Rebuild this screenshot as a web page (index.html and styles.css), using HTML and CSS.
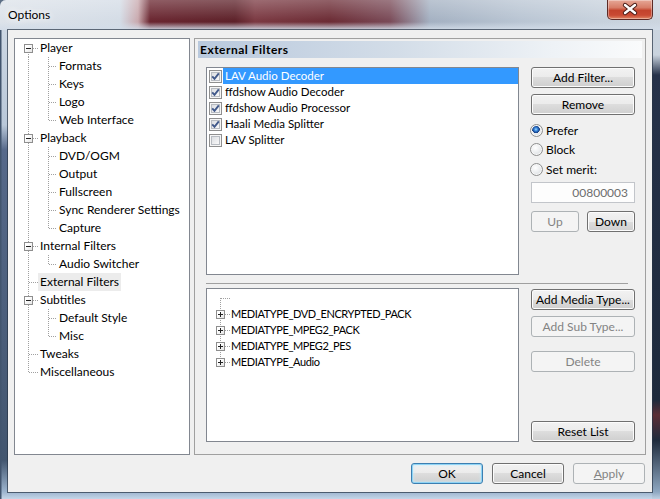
FILE: index.html
```html
<!DOCTYPE html>
<html lang="en">
<head>
    <meta charset="UTF-8">
    <title>Options</title>
    <link rel="stylesheet" href="styles.css">
</head>
<body>
    <div class="window">
        <div class="titlebar">
            <span class="title">Options</span>
            <span class="close-btn">
                <svg width="44" height="19" viewBox="0 0 44 19">
                    <path d="M17 5 L27 13 M27 5 L17 13" stroke="#4a1d18" stroke-width="4.4" stroke-linecap="round" fill="none"/>
                    <path d="M17 5 L27 13 M27 5 L17 13" stroke="#fff" stroke-width="2.4" stroke-linecap="round" fill="none"/>
                </svg>
            </span>
        </div>

        <div class="client">
            <div class="main">
                <!-- page tree -->
                <div class="nav-tree">
                    <div class="row"><span class="g first"><span class="box"></span></span><span class="label">Player</span></div>
                    <div class="row"><span class="g pass"></span><span class="g sub tee"></span><span class="label">Formats</span></div>
                    <div class="row"><span class="g pass"></span><span class="g sub tee"></span><span class="label">Keys</span></div>
                    <div class="row"><span class="g pass"></span><span class="g sub tee"></span><span class="label">Logo</span></div>
                    <div class="row"><span class="g pass"></span><span class="g sub last"></span><span class="label">Web Interface</span></div>
                    <div class="row"><span class="g tee"><span class="box"></span></span><span class="label">Playback</span></div>
                    <div class="row"><span class="g pass"></span><span class="g sub tee"></span><span class="label">DVD/OGM</span></div>
                    <div class="row"><span class="g pass"></span><span class="g sub tee"></span><span class="label">Output</span></div>
                    <div class="row"><span class="g pass"></span><span class="g sub tee"></span><span class="label">Fullscreen</span></div>
                    <div class="row"><span class="g pass"></span><span class="g sub tee"></span><span class="label">Sync Renderer Settings</span></div>
                    <div class="row"><span class="g pass"></span><span class="g sub last"></span><span class="label">Capture</span></div>
                    <div class="row"><span class="g tee"><span class="box"></span></span><span class="label">Internal Filters</span></div>
                    <div class="row"><span class="g pass"></span><span class="g sub last"></span><span class="label">Audio Switcher</span></div>
                    <div class="row"><span class="g tee"></span><span class="label selected">External Filters</span></div>
                    <div class="row"><span class="g tee"><span class="box"></span></span><span class="label">Subtitles</span></div>
                    <div class="row"><span class="g pass"></span><span class="g sub tee"></span><span class="label">Default Style</span></div>
                    <div class="row"><span class="g pass"></span><span class="g sub last"></span><span class="label">Misc</span></div>
                    <div class="row"><span class="g tee"></span><span class="label">Tweaks</span></div>
                    <div class="row"><span class="g last"></span><span class="label">Miscellaneous</span></div>
                </div>

                <!-- property page -->
                <div class="page">
                    <div class="page-title">External Filters</div>
                    <div class="page-body">
                        <div class="section top">
                            <div class="listbox">
                                <div class="item"><span class="cb"><svg width="11" height="11" viewBox="0 0 11 11"><path d="M2.2 5.4 L4.5 7.9 L8.8 2.4" stroke="#41598a" stroke-width="1.9" fill="none"/></svg></span><span class="text selected">LAV Audio Decoder</span></div>
                                <div class="item"><span class="cb"><svg width="11" height="11" viewBox="0 0 11 11"><path d="M2.2 5.4 L4.5 7.9 L8.8 2.4" stroke="#41598a" stroke-width="1.9" fill="none"/></svg></span><span class="text">ffdshow Audio Decoder</span></div>
                                <div class="item"><span class="cb"><svg width="11" height="11" viewBox="0 0 11 11"><path d="M2.2 5.4 L4.5 7.9 L8.8 2.4" stroke="#41598a" stroke-width="1.9" fill="none"/></svg></span><span class="text">ffdshow Audio Processor</span></div>
                                <div class="item"><span class="cb"><svg width="11" height="11" viewBox="0 0 11 11"><path d="M2.2 5.4 L4.5 7.9 L8.8 2.4" stroke="#41598a" stroke-width="1.9" fill="none"/></svg></span><span class="text">Haali Media Splitter</span></div>
                                <div class="item"><span class="cb"></span><span class="text">LAV Splitter</span></div>
                            </div>
                            <div class="side">
                                <button class="btn">Add Filter...</button>
                                <button class="btn gap-6">Remove</button>
                                <div class="radios">
                                    <div class="radio"><span class="rb on"></span>Prefer</div>
                                    <div class="radio"><span class="rb"></span>Block</div>
                                    <div class="radio"><span class="rb"></span>Set merit:</div>
                                </div>
                                <div class="merit">00800003</div>
                                <div class="updown">
                                    <button class="btn" disabled>Up</button>
                                    <button class="btn">Down</button>
                                </div>
                            </div>
                        </div>

                        <div class="sep"></div>

                        <div class="section bottom">
                            <div class="type-tree">
                                <div class="row"><span class="g first"></span></div>
                                <div class="row"><span class="g tee"><span class="box plus"></span></span><span class="label">MEDIATYPE_DVD_ENCRYPTED_PACK</span></div>
                                <div class="row"><span class="g tee"><span class="box plus"></span></span><span class="label">MEDIATYPE_MPEG2_PACK</span></div>
                                <div class="row"><span class="g tee"><span class="box plus"></span></span><span class="label">MEDIATYPE_MPEG2_PES</span></div>
                                <div class="row"><span class="g last"><span class="box plus"></span></span><span class="label">MEDIATYPE_Audio</span></div>
                            </div>
                            <div class="side">
                                <button class="btn gap-1">Add Media Type...</button>
                                <button class="btn gap-6" disabled>Add Sub Type...</button>
                                <button class="btn gap-14" disabled>Delete</button>
                                <button class="btn push-down">Reset List</button>
                            </div>
                        </div>
                    </div>
                </div>
            </div>

            <div class="footer">
                <button class="btn wide default">OK</button>
                <button class="btn wide">Cancel</button>
                <button class="btn wide" disabled><u>A</u>pply</button>
            </div>
        </div>
    </div>
</body>
</html>
```

FILE: styles.css
```css
* {
    box-sizing: border-box;
}

body {
    margin: 0;
    background: #5d6f86;
    font-family: "Segoe UI", Lato, "Liberation Sans", sans-serif;
    font-size: 12px;
    color: #000;
}

/* glass frame */
.window {
    width: 660px;
    height: 499px;
    padding: 0 8px 7px 8px;
    display: flex;
    flex-direction: column;
    overflow: hidden;
    border-radius: 6px 0 0 0;
    background:
        linear-gradient(to bottom, #cdd6e0 0, #c9d3de 55px, #26324a 75px, #1e2a3c 400px, #5b2d35 415px, #1f2b3c 440px, #8ea7c1 492px, #bfd0e2 499px) right top / 8px 100% no-repeat,
        linear-gradient(to right, #42556e 0, #42556e 1px, transparent 2px),
        linear-gradient(to bottom, #d2dbe6 0, #b9c8d9 125px, #56698a 150px, #43566f 460px, #9db5cf 492px, #c5d6e8 499px);
    box-shadow: inset 0 1px 0 #4a5a70;
}

.titlebar {
    height: 30px;
    margin: 0 -8px;
    padding: 0 7px 0 8px;
    display: flex;
    align-items: flex-start;
    justify-content: space-between;
    background:
        linear-gradient(to bottom, rgba(255, 255, 255, 0.25), rgba(255, 255, 255, 0) 70%),
        linear-gradient(to bottom, transparent 0, transparent 22px, rgba(210, 220, 232, 0.85) 29px),
        linear-gradient(to right, #dde3ea 0, #d4dce6 120px, #c9a9ae 138px, #6a2630 150px, #5d2129 235px, #7b3942 255px, #6c2c35 330px, #7a4b58 390px, #a4b1c2 430px, #b9c5d3 520px, #c7d1dc 600px, #ccd5df 660px);
}

.title {
    line-height: 30px;
    font-size: 12px;
    text-shadow: 0 0 6px #fff, 0 0 10px #fff;
}

.close-btn {
    width: 46px;
    height: 20px;
    display: flex;
    align-items: center;
    justify-content: center;
    border: 1px solid #5c2a25;
    border-top: none;
    border-radius: 0 0 5px 5px;
    background: linear-gradient(to bottom, #e6a797 0, #d77d68 40%, #c3432c 55%, #c94a33 80%, #e08664 100%);
    box-shadow: inset 0 0 0 1px rgba(255, 255, 255, 0.35);
}

.client {
    height: 462px;
    padding: 8px 6px;
    background: #f0f0f0;
    box-shadow: 0 0 0 1px rgba(40, 52, 70, 0.7);
    display: flex;
    flex-direction: column;
}

.main {
    height: 417px;
    display: flex;
    gap: 4px;
}

/* tree views */
.nav-tree {
    width: 176px;
    border: 1px solid #828790;
    background: #fff;
}

.row {
    height: 18px;
    display: flex;
    --mid: 9px;
}

.label {
    padding: 0 2px;
    line-height: 18px;
    white-space: nowrap;
}

.label.selected {
    background: #ececec;
}

.g {
    flex: none;
    width: 23px;
    --x: 13px;
    --dv: repeating-linear-gradient(to bottom, #a0a0a0 0 1px, transparent 1px 2px);
    --dh: repeating-linear-gradient(to right, #a0a0a0 0 1px, transparent 1px 2px);
    padding-top: calc(var(--mid) - 4px);
    padding-left: calc(var(--x) - 4px);
    background-repeat: no-repeat;
}

.g.sub {
    width: 19px;
    --x: 10px;
}

.g.pass {
    background-image: var(--dv);
    background-position: var(--x) 0;
    background-size: 1px 100%;
}

.g.tee {
    background-image: var(--dh), var(--dv);
    background-position: calc(var(--x) + 1px) var(--mid), var(--x) 0;
    background-size: 100% 1px, 1px 100%;
}

.g.last {
    background-image: var(--dh), var(--dv);
    background-position: calc(var(--x) + 1px) var(--mid), var(--x) 0;
    background-size: 100% 1px, 1px calc(var(--mid) + 1px);
}

.g.first {
    background-image: var(--dh), var(--dv);
    background-position: calc(var(--x) + 1px) var(--mid), var(--x) var(--mid);
    background-size: 100% 1px, 1px 100%;
}

.box {
    display: block;
    width: 9px;
    height: 9px;
    border: 1px solid #8e8e8e;
    background:
        linear-gradient(#222, #222) center / 5px 1px no-repeat,
        linear-gradient(135deg, #fff 30%, #e4e4e4);
}

.box.plus {
    background:
        linear-gradient(#222, #222) center / 5px 1px no-repeat,
        linear-gradient(#222, #222) center / 1px 5px no-repeat,
        linear-gradient(135deg, #fff 30%, #e4e4e4);
}

/* property page */
.page {
    flex: 1;
    border: 1px solid #a0a0a0;
    display: flex;
    flex-direction: column;
}

.page-title {
    height: 17px;
    margin: 2px 3px 0;
    padding-left: 2px;
    line-height: 17px;
    font-weight: bold;
    letter-spacing: 0.5px;
    background: linear-gradient(to right, #b9c9dd 0, #d3dde8 45%, #eef2f6 80%, #fafbfc 100%);
}

.page-body {
    flex: 1;
    padding: 9px 10px 12px 11px;
    display: flex;
    flex-direction: column;
}

.section {
    display: flex;
    gap: 12px;
}

.section.top {
    height: 208px;
}

.section.bottom {
    flex: 1;
}

.sep {
    height: 1px;
    margin: 8px 7px 4px 0;
    background: #a0a0a0;
}

.listbox {
    flex: 1;
    border: 1px solid #828790;
    background: #fff;
    font-size: 11.5px;
}

.item {
    height: 16px;
    display: flex;
    align-items: center;
}

.cb {
    width: 13px;
    height: 13px;
    margin: 0 1px 0 2px;
    flex: none;
    border: 1px solid #8f8f8f;
    background: linear-gradient(135deg, #d3d6db 0, #f4f4f5 70%, #fdfdfd 100%);
    box-shadow: inset 0 0 0 1px #f6f6f6, inset 0 0 0 2px #b8bcc2;
}

.cb svg {
    display: block;
}

.item .text {
    flex: 1;
    height: 16px;
    padding-left: 2px;
    line-height: 16px;
}

.item .text.selected {
    background: #3399ff;
    color: #fff;
}

.type-tree {
    flex: 1;
    padding-top: 1px;
    border: 1px solid #828790;
    background: #fff;
}

.type-tree .row {
    height: 16px;
    --mid: 8px;
}

.type-tree .label {
    line-height: 16px;
    padding-left: 1px;
    font-size: 11px;
    letter-spacing: -0.4px;
}

/* buttons */
.side {
    width: 104px;
    flex: none;
    display: flex;
    flex-direction: column;
}

.btn {
    height: 21px;
    padding: 0;
    border: 1px solid #707070;
    border-radius: 3px;
    font: inherit;
    color: #000;
    background: linear-gradient(to bottom, #f2f2f2 0, #ebebeb 50%, #dddddd 50%, #cfcfcf 100%);
    box-shadow: inset 0 0 0 1px #fcfcfc;
}

.btn:disabled {
    border-color: #adb2b5;
    background: #f4f4f4;
    box-shadow: none;
    color: #838383;
}

.btn.default {
    border-color: #3c7fb1;
    box-shadow: inset 0 0 0 1px #8fd4f5, inset 0 0 3px 1px #c6ebfb;
}

.gap-1 { margin-top: 1px; }
.gap-6 { margin-top: 6px; }
.gap-14 { margin-top: 14px; }
.push-down { margin-top: auto; }

.radios {
    margin: 5px 0 0 -1px;
}

.radio {
    height: 20px;
    display: flex;
    align-items: center;
    gap: 3px;
}

.radio:nth-child(2) {
    height: 19px;
}

.rb {
    width: 13px;
    height: 13px;
    border-radius: 50%;
    border: 1px solid #8e8f8f;
    background: radial-gradient(circle at 40% 35%, #ffffff 0, #eceef0 45%, #cfd3d8 100%);
    box-shadow: inset 0 0 0 1px #f7f7f7;
}

.rb.on {
    background:
        radial-gradient(circle at 45% 40%, #a7dcff 0, #3d8de0 1.5px, #1b4f9e 3px, #173f80 3.6px, transparent 4px),
        radial-gradient(circle at 40% 35%, #ffffff 0, #eceef0 45%, #cfd3d8 100%);
}

.merit {
    height: 21px;
    margin-top: 3px;
    padding-right: 6px;
    border: 1px solid #c2c5ca;
    background: #fdfdfd;
    color: #6d6d6d;
    text-align: right;
    line-height: 19px;
}

.updown {
    margin-top: 8px;
    display: flex;
    gap: 8px;
}

.updown .btn {
    width: 48px;
}

.footer {
    height: 21px;
    margin-top: 8px;
    padding-right: 1px;
    display: flex;
    justify-content: flex-end;
    gap: 9px;
}

.btn.wide {
    width: 72px;
}

.btn u {
    text-decoration: underline;
}
```
